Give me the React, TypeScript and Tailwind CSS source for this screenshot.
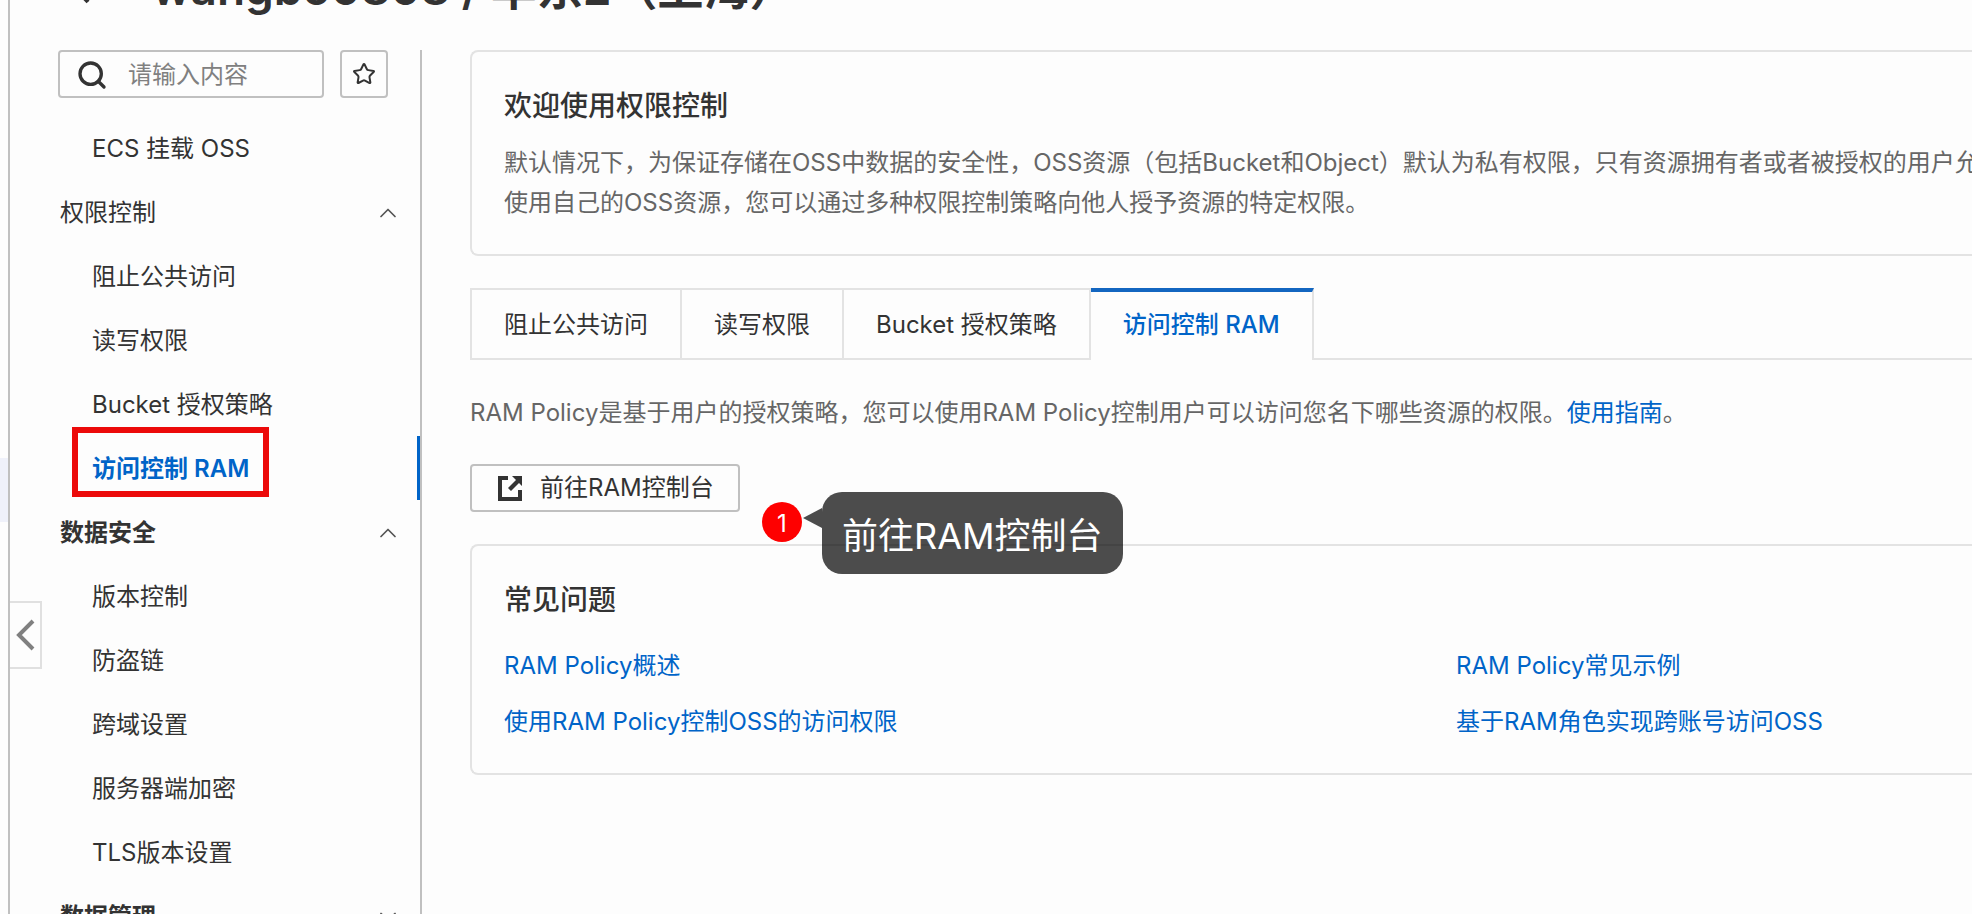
import React from "react";
import { ChevronDown, ChevronUp, Search, Star } from "lucide-react";

const NavItem: React.FC<{ label: string; active?: boolean }> = ({
  label,
  active,
}) => (
  <li
    className={`flex h-16 items-center pt-0.5 pl-8 ${
      active ? "border-r-3 border-[#0064c8] font-semibold text-[#0064c8]" : "mr-1"
    }`}
  >
    <a href="#" className="relative">
      {label}
      {active && (
        <span className="absolute -inset-x-5 -top-[26px] -bottom-3 border-6 border-[#ec0a0a]" />
      )}
    </a>
  </li>
);

const NavGroup: React.FC<{
  label: string;
  bold?: boolean;
  collapsed?: boolean;
  children?: React.ReactNode;
}> = ({ label, bold, collapsed, children }) => (
  <li>
    <button
      type="button"
      className={`flex h-16 w-full items-center justify-between pt-0.5 pr-[18px] ${
        bold ? "font-semibold" : ""
      }`}
    >
      {label}
      {collapsed ? (
        <ChevronDown className="h-7 w-7 text-[#555]" strokeWidth={1.5} />
      ) : (
        <ChevronUp className="h-7 w-7 text-[#555]" strokeWidth={1.5} />
      )}
    </button>
    <ul>{children}</ul>
  </li>
);

const Sidebar: React.FC = () => (
  <nav className="w-[362px] shrink-0 border-r-2 border-[#c0c0c0]">
    <div className="-ml-0.5 flex gap-4">
      <label className="flex h-12 w-[266px] items-center gap-5 rounded-sm border-2 border-[#c0c0c0] pt-0.5 pr-5 pl-4">
        <Search className="h-8 w-8 shrink-0" strokeWidth={2.5} />
        <input
          type="text"
          aria-label="搜索"
          placeholder="请输入内容"
          className="w-full min-w-0 outline-none placeholder:text-[#808080]"
        />
      </label>
      <button
        type="button"
        aria-label="收藏"
        className="flex h-12 w-12 items-center justify-center rounded-sm border-2 border-[#c0c0c0]"
      >
        <Star className="h-6 w-6 shrink-0" strokeWidth={2} strokeLinejoin="miter" />
      </button>
    </div>
    <ul className="pt-[18px]">
      <NavItem label="ECS 挂载 OSS" />
      <NavGroup label="权限控制">
        <NavItem label="阻止公共访问" />
        <NavItem label="读写权限" />
        <NavItem label="Bucket 授权策略" />
        <NavItem label="访问控制 RAM" active />
      </NavGroup>
      <NavGroup label="数据安全" bold>
        <NavItem label="版本控制" />
        <NavItem label="防盗链" />
        <NavItem label="跨域设置" />
        <NavItem label="服务器端加密" />
        <NavItem label="TLS版本设置" />
      </NavGroup>
      <NavGroup label="数据管理" bold collapsed />
    </ul>
  </nav>
);

const Tab: React.FC<{ label: string; active?: boolean }> = ({
  label,
  active,
}) => (
  <button
    type="button"
    role="tab"
    aria-selected={!!active}
    className={`h-[72px] border-r-2 border-[#e3e3e3] px-8 ${
      active
        ? "border-t-4 border-t-[#1366c0] pb-0.5 font-medium text-[#0064c8]"
        : "border-y-2 pt-0.5"
    }`}
  >
    {label}
  </button>
);

const Callout: React.FC = () => (
  <div className="absolute top-7 left-[292px] flex items-start">
    <span className="mt-2.5 flex h-10 w-10 items-center justify-center rounded-full bg-[#fe0000] pt-1 text-white">
      1
    </span>
    <svg className="mt-4 h-7 w-5" viewBox="0 0 20 28" fill="#000" fillOpacity="0.7">
      <path d="M1 10 20 0V20Z" />
    </svg>
    <div className="flex h-[82px] items-center rounded-[20px] bg-black/70 px-5 pt-1.5 text-4xl whitespace-nowrap text-white">
      前往RAM控制台
    </div>
  </div>
);

const App: React.FC = () => (
  <div className="flex h-screen overflow-hidden bg-[#fdfdfd] font-[Inter,'Noto_Sans_CJK_SC',sans-serif] text-2xl text-[#333]">
    <div className="w-2 shrink-0 pt-[458px]">
      <div className="h-16 bg-[#eff1fa]" />
    </div>
    <div className="relative flex min-w-0 flex-1 flex-col border-l-2 border-[#c0c0c0]">
      <button
        type="button"
        aria-label="收起"
        className="absolute top-[601px] left-0 flex h-[68px] w-8 items-center justify-center border-2 border-l-0 border-[#e0e0e0] text-[#808080]"
      >
        <svg
          className="h-8 w-5"
          viewBox="0 0 20 32"
          fill="none"
          stroke="currentColor"
          strokeWidth="4"
        >
          <path d="M18 2 4 16l14 14" />
        </svg>
      </button>
      <header className="flex h-[50px] shrink-0 items-end pb-8 pl-[62px]">
        <h1 className="flex items-center gap-11 text-[46px] leading-[60px] font-semibold whitespace-nowrap">
          <svg
            className="h-9 w-9"
            viewBox="0 0 36 36"
            fill="none"
            stroke="currentColor"
            strokeWidth="4"
          >
            <path d="M34 18H4M16 4 3 18l13 14" />
          </svg>
          wangbo0808 / 华东2（上海）
        </h1>
      </header>
      <div className="flex min-h-0 flex-1 pl-[50px]">
        <Sidebar />
        <main className="min-w-0 flex-1 pl-12">
          <section className="h-[206px] rounded-l-lg border-2 border-r-0 border-[#e3e3e3] px-8 pt-[34px]">
            <h2 className="text-[28px] leading-10 font-medium">
              欢迎使用权限控制
            </h2>
            <p className="pt-[17px] leading-10 whitespace-nowrap text-[#666]">
              默认情况下，为保证存储在OSS中数据的安全性，OSS资源（包括Bucket和Object）默认为私有权限，只有资源拥有者或者被授权的用户允许访问。
              <br />
              使用自己的OSS资源，您可以通过多种权限控制策略向他人授予资源的特定权限。
            </p>
          </section>
          <div role="tablist" className="mt-8 flex border-l-2 border-[#e3e3e3]">
            <Tab label="阻止公共访问" />
            <Tab label="读写权限" />
            <Tab label="Bucket 授权策略" />
            <Tab label="访问控制 RAM" active />
            <div className="flex-1 border-b-2 border-[#e3e3e3]" />
          </div>
          <p className="pt-[33px] leading-10 text-[#666]">
            RAM Policy是基于用户的授权策略，您可以使用RAM
            Policy控制用户可以访问您名下哪些资源的权限。
            <a href="#" className="text-[#0064c8]">
              使用指南
            </a>
            。
          </p>
          <div className="relative mt-[31px]">
            <button
              type="button"
              className="flex h-12 items-center gap-4 rounded-sm border-2 border-[#c0c0c0] px-6"
            >
              <svg className="h-7 w-7" viewBox="0 0 28 28" fill="currentColor">
                <path d="M2 2h10v4H6v17h16v-7h4v11H2ZM16 2h10v10l-3-3-8 8-3-3 8-8Z" />
              </svg>
              前往RAM控制台
            </button>
            <Callout />
          </div>
          <section className="mt-8 h-[231px] rounded-l-lg border-2 border-r-0 border-[#e3e3e3] pt-[34px] pr-10 pl-8">
            <h2 className="text-[28px] leading-10 font-medium">常见问题</h2>
            <div className="grid grid-cols-[2fr_1fr] gap-y-4 pt-[26px] leading-10 whitespace-nowrap text-[#0064c8]">
              <a href="#">RAM Policy概述</a>
              <a href="#">RAM Policy常见示例</a>
              <a href="#">使用RAM Policy控制OSS的访问权限</a>
              <a href="#">基于RAM角色实现跨账号访问OSS</a>
            </div>
          </section>
        </main>
      </div>
    </div>
  </div>
);

export default App;
